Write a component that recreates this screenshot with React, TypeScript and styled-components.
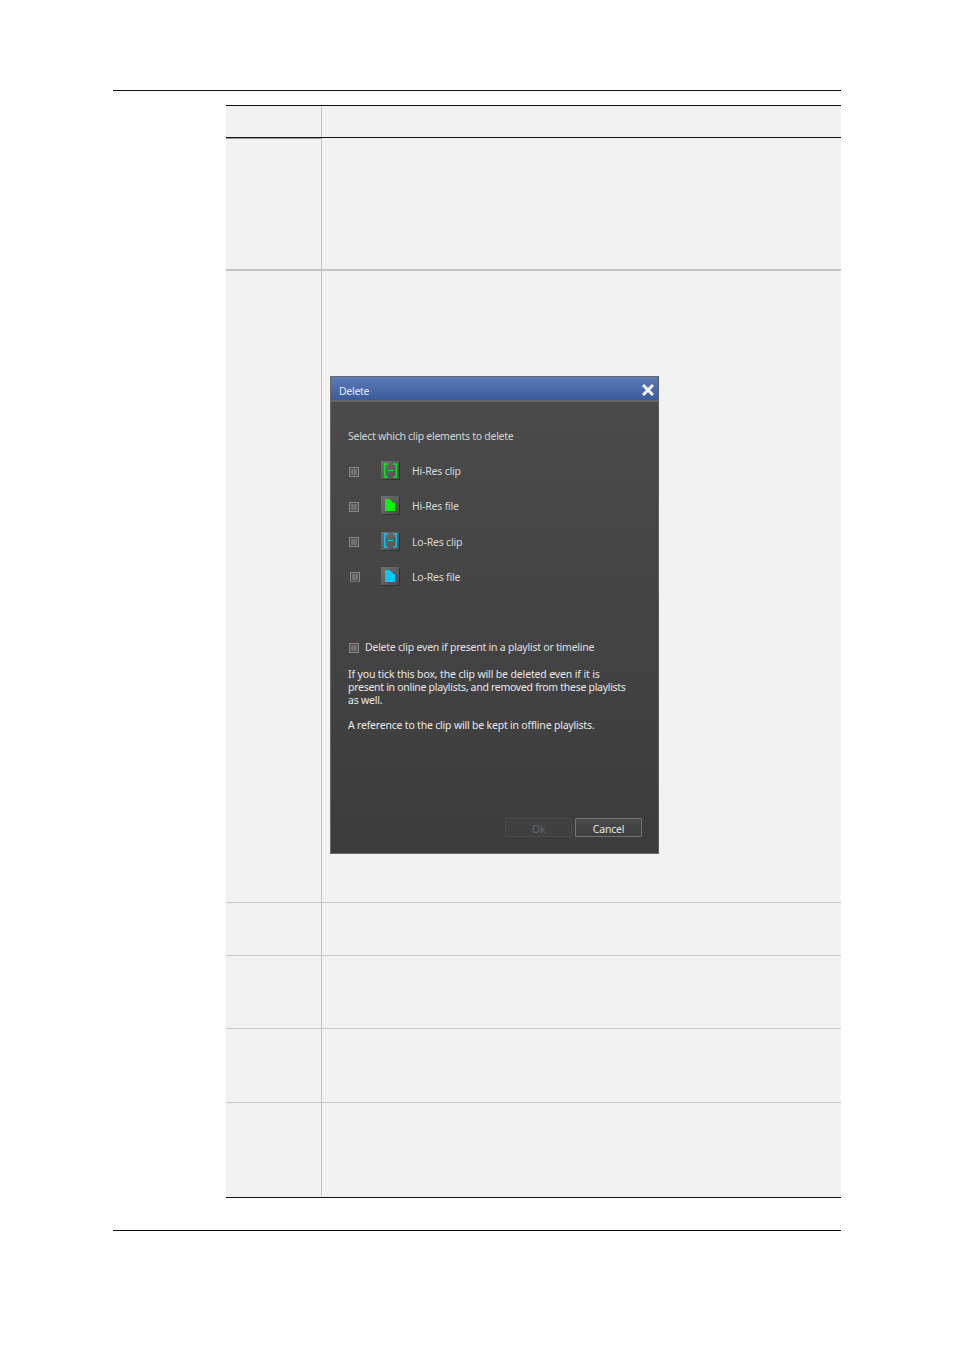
import React from "react";
import styled, { createGlobalStyle } from "styled-components";

const Global = createGlobalStyle`
  html, body { margin: 0; padding: 0; background: #fff; }
  body { font-family: "Noto Sans", "Liberation Sans", sans-serif; }
`;

const Page = styled.div`
  width: 954px;
  height: 1349px;
  padding: 90px 113px 0;
  box-sizing: border-box;
`;

const Rule = styled.div`
  height: 1px;
  background: #111;
`;

const Table = styled.div`
  margin: 14px 0 32px 113px;
  border-top: 1px solid #111;
  border-bottom: 1px solid #111;
  background: #f2f2f2;
`;

const Row = styled.div<{ $h: number; $line: string; $w?: number }>`
  display: grid;
  grid-template-columns: 96px 1fr;
  height: ${(p) => p.$h}px;
  border-bottom: ${(p) => p.$w ?? 1}px solid ${(p) => p.$line};
  box-sizing: border-box;
`;

const LabelCell = styled.div<{ $heavyTop?: boolean }>`
  border-right: 1px solid #c4c4c4;
  border-top: ${(p) => (p.$heavyTop ? "1px solid #999" : "none")};
`;

const ContentCell = styled.div`
  padding: 105px 0 0 8px;
`;

const Dialog = styled.div`
  width: 329px;
  height: 478px;
  box-sizing: border-box;
  border: 1px solid #6a6a6a;
  border-right-color: #5c5c5c;
  background: linear-gradient(#4b4b4b, #3c3c3c);
  display: flex;
  flex-direction: column;
  color: #e0e0e0;
  font-size: 10.5px;
`;

const TitleBar = styled.div`
  height: 25px;
  box-sizing: border-box;
  padding: 2px 4px 0 8px;
  border-bottom: 2px solid #666;
  background: linear-gradient(#5b7cb8, #3b5a9a);
  display: flex;
  align-items: center;
  justify-content: space-between;
  color: #e4e8f0;
`;

const TitleText = styled.span`
  font-size: 10.5px;
  padding-top: 3px;
  letter-spacing: -0.3px;
`;

const Body = styled.div`
  flex: 1;
  display: flex;
  flex-direction: column;
  padding: 27px 16px 16px 17px;
`;

const Prompt = styled.div`
  line-height: 14px;
  color: #d4d4d4;
  letter-spacing: -0.27px;
`;

const Elements = styled.div`
  margin-top: 18px;
  display: flex;
  flex-direction: column;
  gap: 17.33px;
`;

const ElementRow = styled.div`
  height: 18px;
  display: flex;
  align-items: center;
`;

const Check = styled.span<{ $nudge?: number }>`
  width: 10px;
  height: 10px;
  flex: none;
  box-sizing: border-box;
  border: 1px solid #8a8a8a;
  ${(p) => (p.$nudge ? "border-bottom-color: transparent;" : "")}
  background: #707070;
  box-shadow: inset 0 0 0 1px #4e4e4e;
  margin-left: ${(p) => 1 + (p.$nudge ?? 0)}px;
  margin-top: 3px;
`;

const IconTile = styled.span<{ $nudge?: number }>`
  width: 18px;
  height: 18px;
  flex: none;
  margin-left: ${(p) => 22 - (p.$nudge ?? 0)}px;
  background: linear-gradient(135deg, #707070, #4c4c4c);
  box-shadow: 1px 1px 0 #333;
  display: flex;
  align-items: center;
  justify-content: center;
`;

const ElementLabel = styled.span`
  margin-left: 13px;
  padding-top: 2px;
  font-size: 10.5px;
  color: #d8d8d8;
  letter-spacing: -0.2px;
`;

const ForceRow = styled.div`
  margin-top: 55px;
  height: 14px;
  display: flex;
  align-items: center;
  gap: 6px;
  letter-spacing: -0.23px;
`;

const Explain = styled.p`
  margin: 14px 0 0;
  line-height: 13px;
  color: #e8e8e8;
`;

const Line = styled.span<{ $ls: number }>`
  display: block;
  letter-spacing: ${(p) => p.$ls}px;
`;

const Reference = styled.p`
  margin: 11px 0 0;
  line-height: 14px;
  color: #e8e8e8;
  letter-spacing: -0.2px;
`;

const Buttons = styled.div`
  margin-top: auto;
  display: flex;
  justify-content: flex-end;
  gap: 3px;
`;

const Btn = styled.button<{ $off?: boolean }>`
  width: 67px;
  height: 19px;
  padding: 2px 0 0;
  border-radius: 1px;
  font: inherit;
  font-size: 10.5px;
  letter-spacing: -0.2px;
  color: ${(p) => (p.$off ? "#666" : "#e4e4e4")};
  border: 1px solid ${(p) => (p.$off ? "#484c52" : "#737373")};
  background: ${(p) => (p.$off ? "#404040" : "linear-gradient(#4a4a4a, #3e3e3e)")};
`;

const Bracket = ({ color }: { color: string }) => (
  <svg width="13" height="15" viewBox="0 0 13 15" fill="none" stroke={color} strokeWidth="1.4">
    <path d="M3.8 1H0.8V14H3.8M9.2 1H12.2V14H9.2" />
    <path d="M4 7.5H9" strokeWidth="1" />
  </svg>
);

const FileGlyph = ({ color }: { color: string }) => (
  <svg width="10" height="12" viewBox="0 0 10 12" shapeRendering="crispEdges">
    <path d="M0 0H5V1H6V2H7V3H8V4H10V12H0Z" fill={color} />
  </svg>
);

const CloseGlyph = () => (
  <svg width="12" height="12" viewBox="0 0 12 12" stroke="#f4f6fa" strokeWidth="3">
    <path d="M1 1L11 11M11 1L1 11" />
  </svg>
);

const elements = [
  { label: "Hi-Res clip", icon: <Bracket color="#00f01e" /> },
  { label: "Hi-Res file", icon: <FileGlyph color="#00f800" /> },
  { label: "Lo-Res clip", icon: <Bracket color="#10c4f8" /> },
  { label: "Lo-Res file", icon: <FileGlyph color="#00c8ff" />, nudge: 1 },
];

const rows = [
  { h: 32, line: "#111" },
  { h: 133, line: "#c4c4c4", w: 2, heavyTop: true },
  { h: 632, line: "#c8c8c8", dialog: true },
  { h: 53, line: "#c8c8c8" },
  { h: 73, line: "#c8c8c8" },
  { h: 74, line: "#c8c8c8" },
  { h: 94, line: "transparent" },
];

export default function App() {
  return (
    <Page>
      <Global />
      <Rule />
      <Table>
        {rows.map((r, i) => (
          <Row key={i} $h={r.h} $line={r.line} $w={r.w}>
            <LabelCell $heavyTop={r.heavyTop} />
            {r.dialog ? (
              <ContentCell>
                <Dialog>
                  <TitleBar>
                    <TitleText>Delete</TitleText>
                    <CloseGlyph />
                  </TitleBar>
                  <Body>
                    <Prompt>Select which clip elements to delete</Prompt>
                    <Elements>
                      {elements.map((e) => (
                        <ElementRow key={e.label}>
                          <Check $nudge={e.nudge} />
                          <IconTile $nudge={e.nudge}>{e.icon}</IconTile>
                          <ElementLabel>{e.label}</ElementLabel>
                        </ElementRow>
                      ))}
                    </Elements>
                    <ForceRow>
                      <Check />
                      Delete clip even if present in a playlist or timeline
                    </ForceRow>
                    <Explain>
                      <Line $ls={-0.14}>If you tick this box, the clip will be deleted even if it is</Line>
                      <Line $ls={-0.29}>present in online playlists, and removed from these playlists</Line>
                      <Line $ls={-0.2}>as well.</Line>
                    </Explain>
                    <Reference>A reference to the clip will be kept in offline playlists.</Reference>
                    <Buttons>
                      <Btn $off disabled>Ok</Btn>
                      <Btn>Cancel</Btn>
                    </Buttons>
                  </Body>
                </Dialog>
              </ContentCell>
            ) : (
              <div />
            )}
          </Row>
        ))}
      </Table>
      <Rule />
    </Page>
  );
}
